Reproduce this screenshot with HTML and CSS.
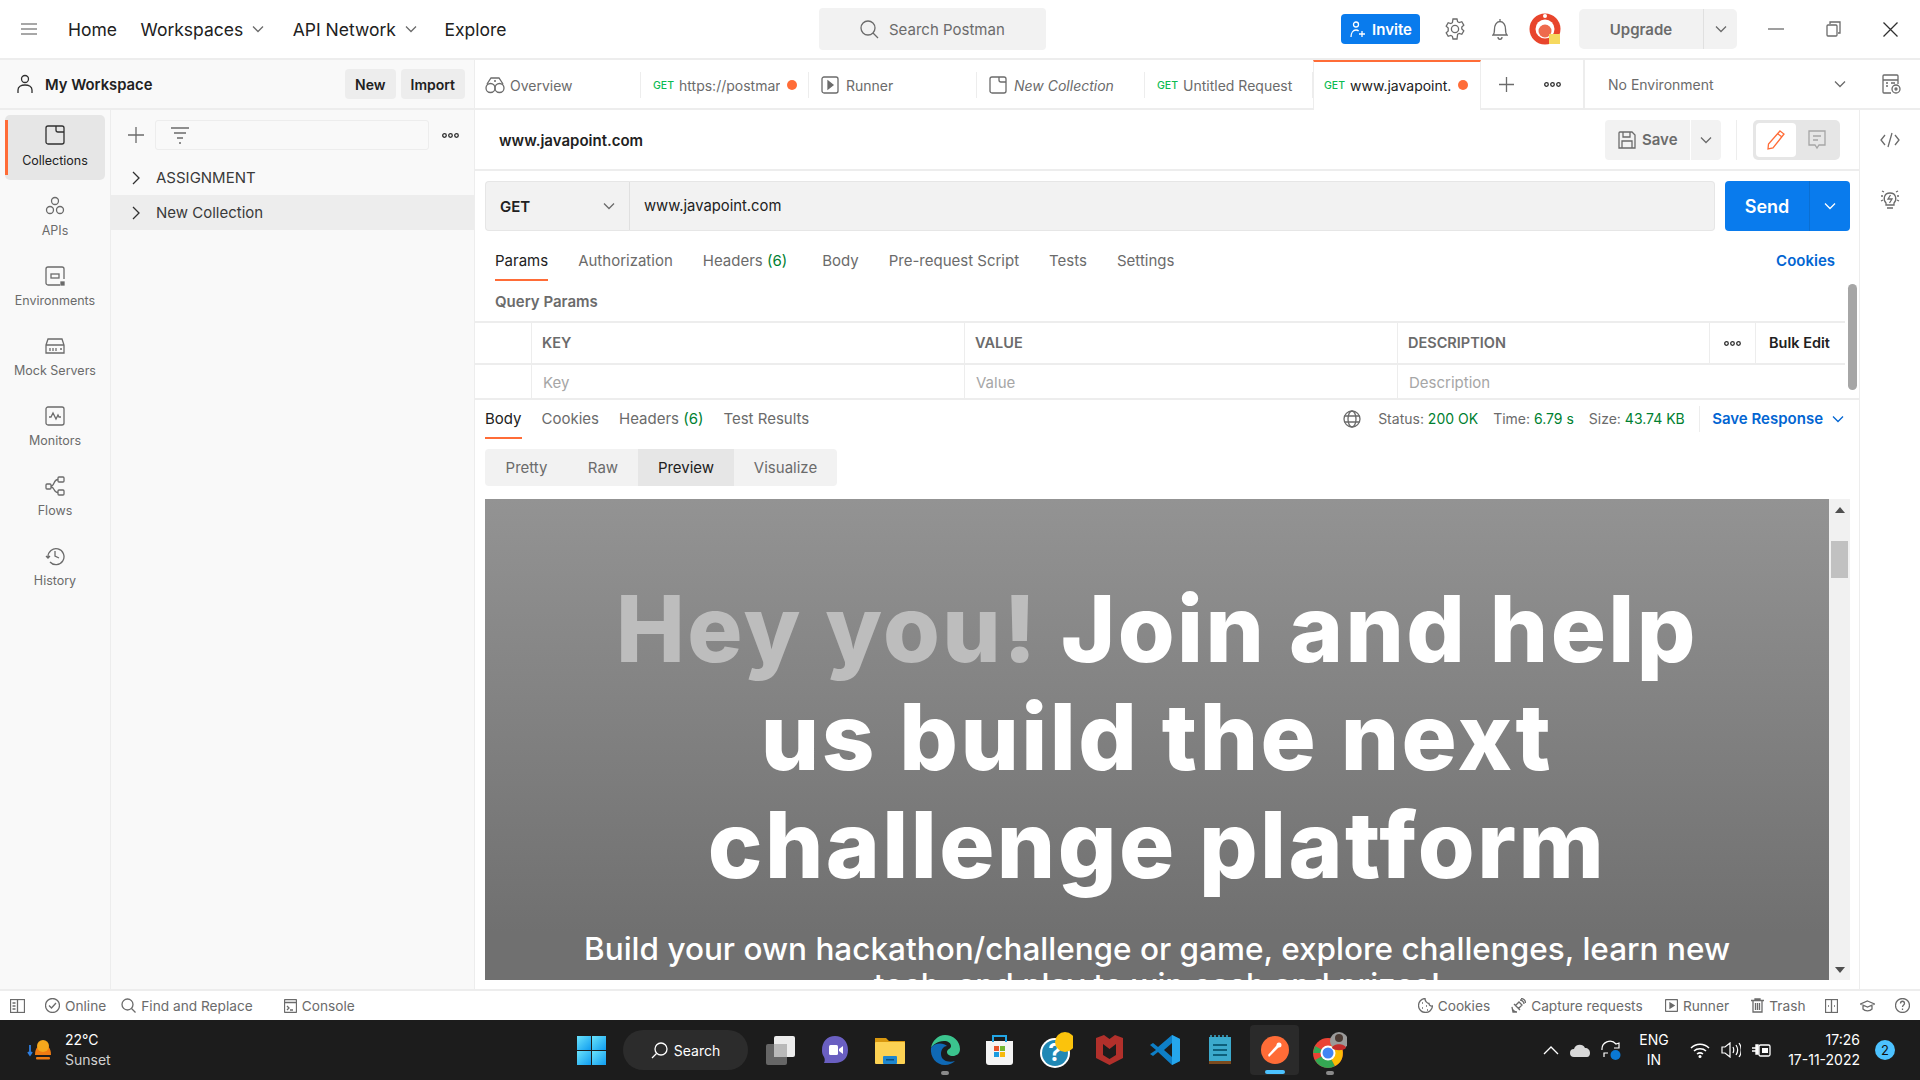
FILE: index.html
```html
<!DOCTYPE html>
<html lang="en">
<head>
<meta charset="utf-8">
<title>Postman</title>
<link rel="stylesheet" href="styles.css">
</head>
<body>
<div class="app">
  <header class="topbar">
    <svg class="ic burger" width="16" height="12" viewBox="0 0 16 12"><path d="M0 1h16M0 6h16M0 11h16"/></svg>
    <nav class="topnav">
      <a class="nav-home">Home</a>
      <a class="nav-ws">Workspaces <svg class="ic chev" width="12" height="8" viewBox="0 0 12 8"><path d="M1 1.500l5 5 5-5"/></svg></a>
      <a class="nav-api">API Network <svg class="ic chev" width="12" height="8" viewBox="0 0 12 8"><path d="M1 1.500l5 5 5-5"/></svg></a>
      <a>Explore</a>
    </nav>
    <div class="search">
      <svg class="ic" width="20" height="20" viewBox="0 0 20 20"><circle cx="9" cy="9" r="7"/><path d="M14 14l5 5"/></svg>
      <span>Search Postman</span>
    </div>
    <button class="invite">
      <svg class="ic ic-white" width="17" height="17" viewBox="0 0 17 17"><circle cx="7" cy="3.500" r="2.500"/><path d="M2 16c0-4 2-7 5-7 1 0 2 .3 2.600 1M10 13h6M13 10v6"/></svg>
      Invite
    </button>
    <svg class="ic gear" width="20" height="22" viewBox="0 0 20 22"><circle cx="10" cy="11" r="3.600"/><path d="M8 1h4l.6 2.700 1.600.9 2.600-.9 2 3.400-2 1.900v2l2 1.900-2 3.400-2.600-.9-1.600.9L12 21H8l-.6-2.700-1.600-.9-2.600.9-2-3.400 2-1.900V10L1.200 8.100l2-3.400 2.600.9 1.600-.9z"/></svg>
    <svg class="ic bell" width="16" height="22" viewBox="0 0 16 22"><path d="M1 17c1.500-1.500 1.500-3 1.500-6S4 3.500 8 3.500 13.500 8 13.500 11s0 4.500 1.500 6zM8 1v2.500M6 19c0 3 4 3 4 0"/></svg>
    <svg class="avatar" width="32" height="32" viewBox="0 0 32 32"><circle cx="16" cy="16" r="15.500" fill="#e8452c"/><circle cx="16" cy="16" r="9.500" fill="#fff"/><circle cx="16" cy="18" r="6.500" fill="#ee6a4d"/><circle cx="16" cy="3" r="2" fill="#fff"/><rect x="20" y="21" width="11" height="10" fill="#f6d95f"/></svg>
    <div class="upgrade"><span class="upgrade-label">Upgrade</span><span class="upgrade-arrow"><svg class="ic" width="12" height="8" viewBox="0 0 12 8"><path d="M1 1.500l5 5 5-5"/></svg></span></div>
    <div class="winctl">
      <svg class="ic" width="16" height="2" viewBox="0 0 16 2"><path d="M0 1h16"/></svg>
      <svg class="ic" width="15" height="16" viewBox="0 0 15 16"><rect x="1" y="4" width="10" height="11" rx="1"/><path d="M4 3V1h10v11h-2"/></svg>
      <svg class="ic ic-dark" width="15" height="15" viewBox="0 0 15 15"><path d="M.5.500l14 14M14.500.500l-14 14"/></svg>
    </div>
  </header>

  <div class="middle">
    <aside class="left">
      <div class="ws-head">
        <svg class="ic ic-dark" width="16" height="20" viewBox="0 0 16 20"><circle cx="8" cy="5" r="3.500"/><path d="M1 19v-3c0-3 3-5 7-5s7 2 7 5v3"/></svg>
        <strong class="ws-title">My Workspace</strong>
        <button class="mini">New</button>
        <button class="mini">Import</button>
      </div>
      <div class="left-body">
        <nav class="rail">
          <a class="rail-item active"><svg class="ic ic-dark" width="20" height="20" viewBox="0 0 20 20"><path d="M3 1h14a2 2 0 0 1 2 2v14a2 2 0 0 1-2 2H3a2 2 0 0 1-2-2V3a2 2 0 0 1 2-2zM11 1v4a2 2 0 0 0 2 2h6"/></svg>Collections</a>
          <a class="rail-item"><svg class="ic" width="20" height="20" viewBox="0 0 20 20"><circle cx="10" cy="5" r="3.500"/><circle cx="5" cy="14" r="3.500"/><circle cx="15" cy="14" r="3.500"/></svg>APIs</a>
          <a class="rail-item"><svg class="ic" width="20" height="20" viewBox="0 0 20 20"><path d="M15 19H3a2 2 0 0 1-2-2V3a2 2 0 0 1 2-2h14a2 2 0 0 1 2 2v10"/><rect x="6" y="8" width="8" height="4"/><rect x="16" y="16" width="3" height="3" fill="#6b6b6b"/></svg>Environments</a>
          <a class="rail-item"><svg class="ic" width="20" height="20" viewBox="0 0 20 18"><path d="M1 8l2-6h14l2 6v8H1zM1 8h18M5 11v3M8 11v3M11 11v3M15 12h2"/></svg>Mock Servers</a>
          <a class="rail-item"><svg class="ic" width="20" height="20" viewBox="0 0 20 20"><rect x="1" y="1" width="18" height="18" rx="2"/><path d="M4 11h2l2-4 3 6 2-4 1 2h2"/></svg>Monitors</a>
          <a class="rail-item"><svg class="ic" width="20" height="20" viewBox="0 0 20 20"><rect x="1" y="8" width="5" height="5" rx="1"/><rect x="13" y="1" width="6" height="5" rx="1"/><rect x="13" y="14" width="6" height="5" rx="1"/><path d="M6 10c4 0 2-6.500 7-6.500M6 11c4 0 2 5.500 7 5.500"/></svg>Flows</a>
          <a class="rail-item"><svg class="ic" width="20" height="20" viewBox="0 0 20 20"><path d="M1 10l2 2 2-2M3 11a8 8 0 1 1 2 5M10 5v5l4 2"/></svg>History</a>
        </nav>
        <div class="coll">
          <div class="coll-tools">
            <svg class="ic" width="16" height="16" viewBox="0 0 16 16"><path d="M8 0v16M0 8h16"/></svg>
            <div class="filter"><svg class="ic" width="18" height="18" viewBox="0 0 18 18"><path d="M0 2h18M3 7h12M6 12h6M8 17h2"/></svg></div>
            <svg class="ic ic-dark dots" width="17" height="5" viewBox="0 0 17 5"><circle cx="2.500" cy="2.500" r="1.800"/><circle cx="8.500" cy="2.500" r="1.800"/><circle cx="14.500" cy="2.500" r="1.800"/></svg>
          </div>
          <div class="coll-row"><svg class="ic ic-dark" width="8" height="14" viewBox="0 0 8 14"><path d="M1 1l6 6-6 6"/></svg>ASSIGNMENT</div>
          <div class="coll-row selected"><svg class="ic ic-dark" width="8" height="14" viewBox="0 0 8 14"><path d="M1 1l6 6-6 6"/></svg>New Collection</div>
        </div>
      </div>
    </aside>

    <section class="right">
      <div class="tabbar">
        <div class="tab first"><svg class="ic" width="20" height="18" viewBox="0 0 20 18"><circle cx="5.500" cy="12" r="4.500"/><circle cx="14.500" cy="12" r="4.500"/><path d="M2 8l4-6h8l4 6M9 5h2"/></svg><span>Overview</span></div>
        <div class="tab req"><span class="get">GET</span><span class="tab-name">https://postmar</span><i class="dot"></i></div>
        <div class="tab"><svg class="ic" width="18" height="18" viewBox="0 0 18 18"><rect x="1" y="1" width="16" height="16" rx="2"/><path d="M7 5l5 4-5 4z" fill="#6b6b6b"/></svg><span>Runner</span></div>
        <div class="tab"><svg class="ic" width="18" height="18" viewBox="0 0 18 18"><path d="M3 1h12a2 2 0 0 1 2 2v12a2 2 0 0 1-2 2H3a2 2 0 0 1-2-2V3a2 2 0 0 1 2-2zM10 1v3a2 2 0 0 0 2 2h5"/></svg><em>New Collection</em></div>
        <div class="tab req"><span class="get">GET</span><span class="tab-name">Untitled Request</span></div>
        <div class="tab req current"><span class="get">GET</span><span class="tab-name">www.javapoint.</span><i class="dot"></i></div>
        <div class="tab-tools">
          <svg class="ic" width="15" height="15" viewBox="0 0 15 15"><path d="M7.500 0v15M0 7.500h15"/></svg>
          <svg class="ic ic-dark" width="17" height="5" viewBox="0 0 17 5"><circle cx="2.500" cy="2.500" r="1.800"/><circle cx="8.500" cy="2.500" r="1.800"/><circle cx="14.500" cy="2.500" r="1.800"/></svg>
        </div>
        <div class="env"><span>No Environment</span><svg class="ic" width="12" height="8" viewBox="0 0 12 8"><path d="M1 1.500l5 5 5-5"/></svg></div>
        <div class="env-eye"><svg class="ic" width="20" height="20" viewBox="0 0 20 20"><path d="M10 19H3a1 1 0 0 1-1-1V2a1 1 0 0 1 1-1h13a1 1 0 0 1 1 1v8M2 6h15M5 9h2M5 12h2M10 9h4"/><circle cx="15" cy="15" r="4"/><circle cx="15" cy="15" r="1"/></svg></div>
      </div>

      <div class="work">
        <main class="main">
          <div class="title-row">
            <strong class="req-title">www.javapoint.com</strong>
            <div class="save"><span class="save-l"><svg class="ic" width="18" height="18" viewBox="0 0 18 18"><path d="M2 1h12l3 3v13H1V2a1 1 0 0 1 1-1zM5 1v5h7V1M4 17v-7h10v7"/></svg>Save</span><span class="save-r"><svg class="ic" width="12" height="8" viewBox="0 0 12 8"><path d="M1 1.500l5 5 5-5"/></svg></span></div>
            <i class="vsep"></i>
            <div class="mode">
              <span class="mode-on"><svg class="ic ic-orange" width="18" height="20" viewBox="0 0 18 20"><path d="M13 1l4 3L6 18l-5 1 .5-5zM11 4l4 3"/></svg></span>
              <span class="mode-off"><svg class="ic ic-light" width="18" height="20" viewBox="0 0 18 20"><path d="M1 1h16v14h-6l-2 3-2-3H1zM5 6h8M5 10h5"/></svg></span>
            </div>
          </div>
          <div class="url-row">
            <div class="method"><b>GET</b><svg class="ic" width="12" height="8" viewBox="0 0 12 8"><path d="M1 1.500l5 5 5-5"/></svg></div>
            <div class="url">www.javapoint.com</div>
            <div class="send"><span class="send-l">Send</span><span class="send-r"><svg class="ic ic-white" width="12" height="8" viewBox="0 0 12 8"><path d="M1 1.500l5 5 5-5"/></svg></span></div>
          </div>
          <div class="req-tabs">
            <a class="on">Params</a><a>Authorization</a><a>Headers <span class="count">(6)</span></a><a class="m-wide">Body</a><a>Pre-request Script</a><a>Tests</a><a>Settings</a>
            <span class="link cookies">Cookies</span>
          </div>
          <div class="qp">Query Params</div>
          <div class="params-wrap">
            <div class="params">
              <div class="cell"></div><div class="cell th">KEY</div><div class="cell th">VALUE</div><div class="cell th">DESCRIPTION</div><div class="cell center"><svg class="ic ic-dark" width="17" height="5" viewBox="0 0 17 5"><circle cx="2.500" cy="2.500" r="1.800"/><circle cx="8.500" cy="2.500" r="1.800"/><circle cx="14.500" cy="2.500" r="1.800"/></svg></div><div class="cell bulk">Bulk Edit</div>
              <div class="cell"></div><div class="cell ph">Key</div><div class="cell ph">Value</div><div class="cell ph wide">Description</div>
            </div>
            <div class="thumb"></div>
          </div>
          <div class="res-head">
            <a class="on">Body</a><a>Cookies</a><a>Headers <span class="count">(6)</span></a><a>Test Results</a>
            <div class="res-meta">
              <svg class="ic globe" width="18" height="18" viewBox="0 0 18 18"><circle cx="9" cy="9" r="8"/><ellipse cx="9" cy="9" rx="4" ry="8"/><path d="M1.500 6h15M1.500 12h15"/></svg>
              <span class="stat">Status: <b>200 OK</b></span>
              <span class="stat">Time: <b>6.79 s</b></span>
              <span class="stat">Size: <b>43.74 KB</b></span>
              <i class="vsep2"></i>
              <span class="link">Save Response</span>
              <svg class="ic ic-blue" width="12" height="8" viewBox="0 0 12 8"><path d="M1 1.500l5 5 5-5"/></svg>
            </div>
          </div>
          <div class="seg"><a>Pretty</a><a>Raw</a><a class="on">Preview</a><a>Visualize</a></div>
          <div class="preview-wrap">
            <div class="preview">
              <h1><span class="hey">Hey you!</span> Join and help<br>us build the next<br>challenge platform</h1>
              <p>Build your own hackathon/challenge or game, explore challenges, learn new<br>tech, and play to win cash and prizes!</p>
            </div>
            <div class="pv-scroll">
              <span class="up"></span>
              <span class="pv-thumb"></span>
              <span class="down"></span>
            </div>
          </div>
        </main>
        <aside class="rrail">
          <svg class="ic" width="20" height="16" viewBox="0 0 20 16"><path d="M5 3L1 8l4 5M15 3l4 5-4 5M12 1L8 15"/></svg>
          <svg class="ic" width="20" height="22" viewBox="0 0 20 22"><path d="M6 15c-3-3-2.500-10 4-10s7 7 4 10v2H6zM7 20h6M10.500 7L8 11h4l-2.500 4M1 8h2M17 8h2M2 3l2 1M18 3l-2 1M1 13l2-1M19 13l-2-1"/></svg>
        </aside>
      </div>
    </section>
  </div>

  <footer class="status">
    <svg class="ic" width="15" height="14" viewBox="0 0 15 14"><rect x=".5" y=".5" width="14" height="13"/><path d="M7.500.500v13M2.500 4h3M2.500 7h3M2.500 10h3"/></svg>
    <span class="st st-online"><svg class="ic" width="15" height="15" viewBox="0 0 15 15"><circle cx="7.500" cy="7.500" r="7"/><path d="M4 7.500l2.500 2.500 4.500-5"/></svg>Online</span>
    <span class="st st-find"><svg class="ic" width="15" height="15" viewBox="0 0 15 15"><circle cx="6.500" cy="6.500" r="5.500"/><path d="M10.500 10.500l4 4"/></svg>Find and Replace</span>
    <span class="st st-console"><svg class="ic" width="13" height="14" viewBox="0 0 13 14"><rect x=".5" y=".5" width="12" height="13" rx="1"/><path d="M.5 3.500h12M3 7l2 2-2 2M6 11h3"/></svg>Console</span>
    <span class="st st-cookies"><svg class="ic" width="15" height="15" viewBox="0 0 15 15"><path d="M7 .500a7 7 0 1 0 7.500 7.500c-2 .500-3.500-1-3.500-2.500C9 5.500 7 3 7 .500zM4 5h1M4 10h1M8 8h1M9 12h1"/></svg>Cookies</span>
    <span class="st st-capture"><svg class="ic" width="15" height="15" viewBox="0 0 15 15"><path d="M1 9a5 5 0 0 0 5 5L2 14zM3 6l6 6M4 8l4-4 3 3-4 4M9 2c2 0 4 2 4 4M10 .500c2.500 0 4.500 2 4.500 4.500"/></svg>Capture requests</span>
    <span class="st st-runner"><svg class="ic" width="13" height="13" viewBox="0 0 13 13"><rect x=".5" y=".5" width="12" height="12" rx="1"/><path d="M5 4l4 2.500L5 9z" fill="#6b6b6b"/></svg>Runner</span>
    <span class="st st-trash"><svg class="ic" width="13" height="15" viewBox="0 0 13 15"><path d="M0 2.500h13M4 2.500V1h5v1.500M2 2.500V14h9V2.500M4.500 5v7M6.500 5v7M8.500 5v7"/></svg>Trash</span>
    <svg class="ic st-two" width="13" height="14" viewBox="0 0 13 14"><rect x=".5" y=".5" width="12" height="13"/><path d="M6.500.500v13M3 7h1M9 7h1"/></svg>
    <svg class="ic st-cap" width="15" height="12" viewBox="0 0 15 12"><path d="M7.500 1L14.500 4l-7 3-7-3zM3 5v4c2 2.500 7 2.500 9 0V5"/></svg>
    <svg class="ic st-help" width="15" height="15" viewBox="0 0 15 15"><circle cx="7.500" cy="7.500" r="7"/><path d="M5.500 5.500c0-3 4-3 4 0 0 1.500-2 1.500-2 3.500M7.500 10.500v1.500"/></svg>
  </footer>

  <footer class="taskbar">
    <div class="weather">
      <svg width="26" height="24" viewBox="0 0 26 24"><path d="M3 7v10M1 14l2 3 2-3" stroke="#2f7fe0" stroke-width="1.800" fill="none"/><path d="M8 17c0-7 3-10 8-10s8 3 8 10z" fill="#f07b12"/><circle cx="16" cy="8" r="6" fill="#f5a71c"/><rect x="9" y="19" width="14" height="2.500" rx="1" fill="#f07b12"/></svg>
      <div class="w-text"><span>22°C</span><span class="w-sub">Sunset</span></div>
    </div>
    <div class="start"><i></i><i></i><i></i><i></i></div>
    <div class="tb-search"><svg class="ic ic-white" width="17" height="17" viewBox="0 0 17 17"><circle cx="10" cy="7" r="6"/><path d="M5.500 11.500L1 16"/></svg>Search</div>
    <div class="apps">
      <span class="app-i"><svg width="30" height="30" viewBox="0 0 30 30"><rect x="9" y="1" width="21" height="21" rx="2" fill="#ececec"/><rect x="1" y="9" width="21" height="21" rx="2" fill="#6d6d6d" opacity=".92"/><rect x="9" y="9" width="13" height="13" fill="#b9b9b9"/></svg></span>
      <span class="app-i"><svg width="28" height="30" viewBox="0 0 28 30"><path d="M14 1c8 0 13 6 13 14s-5 13-13 13H3c1-2 1-4 0-6-2-3-2-5-2-7C1 7 6 1 14 1z" fill="#6a5fc1"/><rect x="8" y="10" width="9" height="10" rx="1.500" fill="#fff"/><path d="M18 14l4-3v8l-4-3z" fill="#fff"/></svg></span>
      <span class="app-i"><svg width="30" height="28" viewBox="0 0 30 28"><path d="M0 2h11l3 3h16v4H0z" fill="#d9980f"/><rect y="6" width="30" height="22" rx="1" fill="#fdd253"/><rect x="8" y="20" width="14" height="8" rx="1" fill="#1f87cf"/><rect x="11" y="23" width="8" height="1.500" fill="#0b4f80"/></svg></span>
      <span class="app-i has-pip"><svg width="30" height="30" viewBox="0 0 30 30"><path d="M15 0c8 0 15 6 15 14 0 5-4 7-7 7-4 0-6-2-6-4 0-3 4-3 4-6 0-3-3-5-7-5C7 6 3 10 1 13 2 6 8 0 15 0z" fill="#3bc48e"/><path d="M1 13C0 22 6 30 15 30c4 0 8-2 10-4-6 2-14 0-14-7 0-5 3-8 6-8-3-3-12-4-16 2z" fill="#0f69b5"/></svg><i class="pip"></i></span>
      <span class="app-i"><svg width="29" height="30" viewBox="0 0 29 30"><path d="M1 6h27v21a3 3 0 0 1-3 3H4a3 3 0 0 1-3-3z" fill="#f4f4f4"/><path d="M8 7V1h13v6" stroke="#22a5e5" stroke-width="2" fill="none"/><rect x="9" y="11" width="5" height="5" fill="#e8552d"/><rect x="15" y="11" width="5" height="5" fill="#74b72f"/><rect x="9" y="17" width="5" height="5" fill="#1a9be0"/><rect x="15" y="17" width="5" height="5" fill="#f7b90c"/></svg></span>
      <span class="app-i"><svg width="36" height="38" viewBox="-2 0 36 38"><circle cx="16" cy="22" r="15" fill="#fff"/><circle cx="16" cy="22" r="13" fill="#2088b5"/><text x="16" y="30" text-anchor="middle" class="q">?</text><circle cx="26" cy="11" r="10" fill="#fbc30c"/></svg></span>
      <span class="app-i"><svg width="27" height="30" viewBox="0 0 27 30"><path d="M0 3l8-3 5.500 4L19 0l8 3v20l-13.500 7L0 23z" fill="#b1302b"/><path d="M7 9l6.500 5L20 9v11l-6.500 4L7 20z" fill="#1c1c1c"/></svg></span>
      <span class="app-i"><svg width="30" height="30" viewBox="0 0 30 30"><path d="M22 0l8 4v22l-8 4L8 17l-5 4-3-2 6-4-6-5 3-2 5 4z" fill="#0e7fc7"/><path d="M22 0l8 4v22l-8 4z" fill="#25a6ec"/><path d="M22 8l-8 7 8 7z" fill="#1c1c1c"/></svg></span>
      <span class="app-i"><svg width="22" height="30" viewBox="0 0 22 30"><rect y="2" width="22" height="26" fill="#3ba9cc"/><rect y="26" width="22" height="3" fill="#7b4a1e"/><path d="M4 10h14M4 15h14M4 20h14" stroke="#0d5f7b" stroke-width="2"/><path d="M2 0v3M6 0v3M10 0v3M14 0v3M18 0v3" stroke="#3ba9cc" stroke-width="1.500"/></svg></span>
      <span class="app-i postman"><svg width="28" height="28" viewBox="0 0 28 28"><circle cx="14" cy="14" r="14" fill="#ff6c37"/><path d="M8 21l9-9 3-3-2-2-3 3-8 9z" fill="#fff"/><circle cx="18" cy="9" r="2.500" fill="#fff"/></svg><i class="active-bar"></i></span>
      <span class="app-i has-pip"><svg width="34" height="36" viewBox="0 0 34 36"><circle cx="15" cy="21" r="15" fill="#ea4335"/><path d="M15 21L2 28c4 8 14 10 20 6z" fill="#34a853"/><path d="M15 21l7 13c7-3 10-12 6-20H15z" fill="#fbbc05"/><path d="M0 21L15 21 2 14z" fill="#34a853"/><circle cx="15" cy="21" r="7.500" fill="#fff"/><circle cx="15" cy="21" r="5.500" fill="#4285f4"/><circle cx="26" cy="9" r="9" fill="#9a9a9a"/><circle cx="26" cy="6" r="4" fill="#4a3a33"/><path d="M19 16c1-5 13-5 14 0-3 3-11 3-14 0z" fill="#c42c2c"/></svg><i class="pip"></i></span>
    </div>
    <div class="tray">
      <svg class="ic ic-white" width="16" height="9" viewBox="0 0 16 9"><path d="M1 8l7-7 7 7"/></svg>
      <svg width="20" height="13" viewBox="0 0 20 13"><path d="M4 13a4 4 0 0 1 0-8c1-5 9-6 11-1 3 0 5 2 5 5 0 2-1 4-3 4z" fill="#d8d8d8"/></svg>
      <svg class="sync" width="20" height="20" viewBox="0 0 20 20"><path d="M1 10a8 8 0 0 1 14-6l3-1v5h-5M3 17v-4h4" stroke="#fff" stroke-width="1.200" fill="none"/><circle cx="14.500" cy="15" r="5" fill="#0a78d4"/></svg>
      <div class="lang"><span>ENG</span><span>IN</span></div>
      <svg width="20" height="15" viewBox="0 0 20 15"><path d="M1 5c5-5 13-5 18 0M4 8c3-3 9-3 12 0M7 11c2-1.500 4-1.500 6 0" stroke="#fff" stroke-width="1.500" fill="none"/><circle cx="10" cy="13.500" r="1.500" fill="#fff"/></svg>
      <svg width="20" height="16" viewBox="0 0 20 16"><path d="M1 5h3l5-4v14l-5-4H1zM12 5c1 2 1 4 0 6M15 3c2 3 2 7 0 10M18 1c3 4 3 10 0 14" stroke="#fff" stroke-width="1.200" fill="none"/></svg>
      <svg width="20" height="16" viewBox="0 0 20 16"><path d="M0 6h4M0 9h4M4 3v9h2V3z" stroke="#fff" stroke-width="1.400" fill="#fff"/><rect x="7" y="3" width="11" height="11" rx="1.500" stroke="#fff" stroke-width="1.300" fill="none"/><rect x="10" y="6" width="6" height="5" fill="#fff"/></svg>
      <div class="clock"><span>17:26</span><span>17-11-2022</span></div>
      <span class="badge">2</span>
    </div>
  </footer>
</div>
</body>
</html>
```

FILE: styles.css
```css
* { box-sizing: border-box; }
html, body { margin: 0; height: 100%; overflow: hidden; }
body { font-family: Inter, "Liberation Sans", sans-serif; font-size: 15px; color: #6b6b6b; background: #fff; }
i { font-style: normal; }
em { font-style: italic; }
button { font: inherit; border: 0; }

.ic { fill: none; stroke: #6b6b6b; stroke-width: 1.300; flex: none; display: block; }
.ic-dark { stroke: #303030; }
.ic-white { stroke: #fff; }
.ic-orange { stroke: #ff6c37; }
.ic-blue { stroke: #0265d2; }
.ic-light { stroke: #a6a6a6; }

.app { width: 1920px; height: 1080px; display: flex; flex-direction: column; overflow: hidden; }

/* Top bar */
.topbar { height: 60px; flex: none; display: flex; align-items: center; border-bottom: 2px solid #ededed; padding-left: 21px; }
.burger { stroke: #8a8a8a; }
.topnav { display: flex; gap: 25px; margin-left: 31px; font-size: 17.500px; color: #212121; width: 751px; }
.topnav a { display: flex; align-items: center; gap: 9px; }
.nav-home { margin-right: -1.500px; }
.nav-ws { margin-right: 3.500px; }
.nav-api { margin-right: 2.500px; }
.search { width: 227px; height: 42px; background: #f2f2f2; border-radius: 4px; display: flex; align-items: center; gap: 10px; padding-left: 40px; font-size: 15px; color: #6b6b6b; }
.invite { margin-left: 295px; width: 79px; height: 30px; background: #097bed; color: #fff; border-radius: 4px; display: flex; align-items: center; justify-content: center; gap: 6px; font-weight: 600; font-size: 15px; }
.gear { margin-left: 25px; }
.bell { margin-left: 27px; }
.avatar { margin-left: 21px; }
.upgrade { margin-left: 18px; width: 158px; height: 40px; background: #f2f2f2; border-radius: 5px; display: flex; font-weight: 600; font-size: 15px; }
.upgrade-label { width: 124px; display: flex; align-items: center; justify-content: center; }
.upgrade-arrow { flex: 1; border-left: 1px solid #e0e0e0; display: flex; align-items: center; justify-content: center; }
.winctl { display: flex; align-items: center; margin-left: 31px; gap: 42px; }

/* Middle */
.middle { flex: 1; min-height: 0; display: flex; }
.left { width: 475px; flex: none; background: #f9f9f9; border-right: 1px solid #ededed; display: flex; flex-direction: column; }
.ws-head { height: 50px; flex: none; display: flex; align-items: center; gap: 5px; border-bottom: 2px solid #ededed; padding: 0 9px 0 17px; }
.ws-title { flex: 1; margin-left: 7px; padding-top: 2px; font-size: 14.800px; font-weight: 600; color: #212121; }
.mini { height: 30px; padding: 0 10px; background: #ededed; border-radius: 4px; color: #212121; font-weight: 600; font-size: 14px; }
.left-body { flex: 1; display: flex; min-height: 0; }
.rail { width: 111px; flex: none; border-right: 1px solid #ededed; padding: 5px 5px 0; display: flex; flex-direction: column; gap: 5px; }
.rail-item { height: 65px; flex: none; display: flex; flex-direction: column; align-items: center; gap: 7px; padding-top: 11px; font-size: 12.500px; color: #6b6b6b; border-radius: 5px; }
.rail-item.active { background: #e6e6e6; color: #212121; position: relative; gap: 8px; padding-top: 10px; }
.rail-item.active::before { content: ""; position: absolute; left: 0; top: 5px; bottom: 5px; width: 3px; background: #ff6c37; }
.coll { flex: 1; min-width: 0; padding-top: 10px; }
.coll-tools { display: flex; align-items: center; height: 30px; padding: 0 12px 0 17px; }
.filter { width: 274px; height: 30px; margin-left: 11px; border: 1px solid #ededed; border-radius: 3px; padding: 5px 0 0 15px; }
.dots { margin-left: 13px; }
.coll-row { height: 35px; display: flex; align-items: center; gap: 16px; padding-left: 21px; font-size: 15px; color: #3a3a3a; }
.coll-tools + .coll-row { margin-top: 10px; }
.coll-row.selected { background: #ededed; }

/* Right */
.right { flex: 1; min-width: 0; display: flex; flex-direction: column; }
.tabbar { height: 50px; flex: none; display: flex; border-bottom: 2px solid #ededed; }
.tab { width: 168px; flex: none; margin-bottom: -2px; display: flex; align-items: center; gap: 7px; padding: 0 12px; font-size: 14px; color: #6b6b6b; position: relative; white-space: nowrap; overflow: hidden; }
.tab.req { gap: 5px; }
.tab.first { width: 166px; padding-left: 10px; gap: 5px; }
.tab::after { content: ""; position: absolute; right: 0; top: 12px; bottom: 12px; width: 1px; background: #ededed; }
.get { font-size: 10.500px; color: #0cbb52; font-weight: 500; }
.tab-name { flex: 1; min-width: 0; overflow: hidden; }
.dot { width: 10px; height: 10px; border-radius: 50%; background: #ff6c37; flex: none; margin-left: 2px; }
.tab.current { background: #fff; border-top: 2px solid #ff6c37; border-left: 1px solid #ededed; border-right: 1px solid #ededed; color: #212121; padding-bottom: 2px; padding-left: 10px; }
.tab.current::after { display: none; }
.tab-tools { width: 102px; flex: none; display: flex; align-items: center; gap: 30px; padding-left: 18px; }
.env { width: 278px; flex: none; border-left: 2px solid #ededed; display: flex; align-items: center; justify-content: space-between; padding: 0 15px 0 23px; font-size: 14px; }
.env-eye { flex: 1; display: flex; align-items: center; justify-content: center; }

.work { flex: 1; min-height: 0; display: flex; }
.main { width: 1384px; flex: none; display: flex; flex-direction: column; }
.rrail { flex: 1; border-left: 1px solid #ededed; display: flex; flex-direction: column; align-items: center; gap: 40px; padding-top: 22px; }

.title-row { height: 61px; flex: none; display: flex; align-items: center; border-bottom: 2px solid #ededed; padding: 0 19px 0 24px; }
.req-title { flex: 1; font-size: 15px; font-weight: 600; color: #212121; padding-top: 2px; }
.save { display: flex; height: 40px; gap: 1px; font-weight: 600; font-size: 15px; }
.save-l { width: 85px; background: #f2f2f2; border-radius: 4px 0 0 4px; display: flex; align-items: center; gap: 6px; padding-left: 13px; }
.save-r { width: 30px; background: #f2f2f2; border-radius: 0 4px 4px 0; display: flex; align-items: center; justify-content: center; }
.vsep { width: 1px; height: 40px; background: #ededed; margin: 0 16px 0 15px; }
.mode { width: 87px; height: 40px; background: #e6e6e6; border-radius: 5px; padding: 3px; display: flex; }
.mode-on { width: 40px; background: #fff; border-radius: 4px; display: flex; align-items: center; justify-content: center; }
.mode-off { flex: 1; display: flex; align-items: center; justify-content: center; }

.url-row { height: 50px; flex: none; margin: 10px 9px 0 10px; display: flex; }
.method { width: 145px; background: #f2f2f2; border: 1px solid #e6e6e6; border-right: 1px solid #e0e0e0; border-radius: 4px 0 0 4px; display: flex; align-items: center; justify-content: space-between; padding: 0 14px; }
.method b { font-size: 15px; font-weight: 600; color: #212121; }
.url { flex: 1; background: #f2f2f2; border: 1px solid #e6e6e6; border-left: 0; border-radius: 0 4px 4px 0; display: flex; align-items: center; padding-left: 14px; color: #212121; font-size: 14.800px; }
.send { width: 125px; margin-left: 10px; background: #097bed; border-radius: 4px; color: #fff; display: flex; }
.send-l { width: 85px; display: flex; align-items: center; justify-content: center; font-weight: 600; font-size: 18px; border-right: 1px solid #0a6fd3; }
.send-r { flex: 1; display: flex; align-items: center; justify-content: center; }

.req-tabs { height: 50px; flex: none; display: flex; gap: 30px; padding: 0 24px 0 20px; font-size: 15px; }
.req-tabs a { display: flex; align-items: center; height: 100%; padding-top: 8px; white-space: pre; }
.req-tabs a.on, .res-head a.on { color: #212121; box-shadow: inset 0 -2px 0 #ff6c37; }
.m-wide { margin-left: 5px; }
.count { color: #007f31; }
.link { color: #0265d2; font-weight: 600; font-size: 15px; }
.cookies { margin-left: auto; align-self: center; padding-top: 8px; }
.qp { height: 40px; flex: none; padding-left: 20px; display: flex; align-items: center; font-weight: 600; font-size: 15px; color: #6b6b6b; }

.params-wrap { flex: none; position: relative; }
.params { display: grid; grid-template-columns: 56px 433px 433px 312px 46px 90px; grid-template-rows: 42px 35px; width: 1370px; }
.cell { border-top: 2px solid #ededed; border-left: 1px solid #ededed; display: flex; align-items: center; padding: 0 0 1px 10px; font-size: 14.500px; min-width: 0; }
.cell:first-child, .cell:nth-child(7) { border-left: 0; }
.th { font-weight: 600; color: #6b6b6b; }
.center { justify-content: center; padding: 0; }
.bulk { color: #212121; font-weight: 600; padding-left: 13px; white-space: nowrap; }
.ph { color: #a6a6a6; padding: 2px 0 0 11px; font-size: 15px; }
.wide { grid-column: span 3; }
.thumb { position: absolute; right: 2px; top: -37px; width: 9px; height: 106px; background: #a6a6a6; border-radius: 5px; }

.res-head { height: 52px; flex: none; display: flex; gap: 20px; align-items: stretch; border-top: 2px solid #ededed; padding: 0 15px 0 10px; font-size: 15px; }
.res-head a { display: flex; align-items: center; white-space: pre; height: 39px; padding-bottom: 2px; }
.res-meta { margin-left: auto; display: flex; align-items: center; height: 37px; font-size: 14px; }
.stat { margin-right: 15px; white-space: nowrap; }
.stat b { font-weight: 400; color: #007f31; }
.stat:nth-of-type(3) { margin-right: 14.500px; }
.globe { margin-right: 17px; }
.vsep2 { width: 1px; height: 26px; background: #ededed; margin-right: 12px; }
.res-meta .ic-blue { margin-left: 9px; }

.seg { margin-left: 10px; margin-top: -1px; width: 352px; height: 37px; flex: none; background: #f2f2f2; border-radius: 4px; display: flex; overflow: hidden; font-size: 15px; }
.seg a { display: flex; align-items: center; justify-content: center; }
.seg a:nth-child(1) { width: 83px; }
.seg a:nth-child(2) { width: 70px; }
.seg a:nth-child(3) { width: 96px; }
.seg a:nth-child(4) { width: 103px; }
.seg a.on { background: #e6e6e6; color: #212121; }

.preview-wrap { margin: 13px 9px 0 10px; height: 481px; flex: none; display: flex; }
.preview { flex: 1; min-width: 0; overflow: hidden; background: linear-gradient(#939393, #707070 90%); color: #fff; text-align: center; padding-top: 76px; }
.preview h1 { margin: 0; font-size: 92px; line-height: 108px; font-weight: 800; letter-spacing: 2.400px; }
.hey { color: #bdbdbd; }
.preview p { margin: 32px 0 0; font-size: 31.500px; line-height: 36px; font-weight: 500; }
.pv-scroll { width: 21px; flex: none; background: #f1f1f1; position: relative; display: flex; flex-direction: column; align-items: center; }
.up { width: 0; height: 0; border: 5px solid transparent; border-bottom: 6px solid #505050; border-top: 0; margin-top: 8px; }
.pv-thumb { width: 17px; height: 37px; background: #c1c1c1; margin-top: 28px; }
.down { width: 0; height: 0; border: 5px solid transparent; border-top: 6px solid #505050; border-bottom: 0; margin-top: auto; margin-bottom: 7px; }

/* Status footer */
.status { height: 31px; flex: none; border-top: 2px solid #ededed; display: flex; align-items: center; padding-left: 10px; font-size: 13.700px; }
.st { display: flex; align-items: center; gap: 5px; white-space: nowrap; }
.st-online { margin-left: 20px; }
.st-find { margin-left: 15px; }
.st-console { margin-left: 31px; }
.st-cookies { margin-left: auto; }
.st-capture { margin-left: 21px; }
.st-runner { margin-left: 22.200px; }
.st-trash { margin-left: 22.200px; }
.st-two { margin-left: 19.500px; }
.st-cap { margin-left: 22px; }
.st-help { margin: 0 10px 0 20px; }

/* Taskbar */
.taskbar { height: 60px; flex: none; background: #1c1c1c; color: #fff; display: flex; align-items: center; padding-left: 27px; }
.weather { display: flex; align-items: center; gap: 12px; width: 550px; }
.w-text { display: flex; flex-direction: column; font-size: 14px; line-height: 20px; }
.w-sub { color: #d0d0d0; }
.start { width: 29px; height: 29px; display: grid; grid-template-columns: 1fr 1fr; gap: 1px; }
.start i { background: linear-gradient(135deg, #6ae3fb, #0f9cf0); }
.tb-search { margin-left: 17px; width: 125px; height: 40px; border-radius: 20px; background: #2c2c2c; display: flex; align-items: center; justify-content: center; gap: 6px; font-size: 14px; }
.apps { display: flex; align-items: center; margin-left: 4px; width: 600px; }
.app-i { flex: none; width: 55px; height: 50px; display: flex; align-items: center; justify-content: center; position: relative; }
.app-i .q { font: 700 24px Inter, sans-serif; fill: #fff; }
.postman { background: #2a2a2a; border-radius: 4px; width: 49px; margin: 0 3px; }
.pip { position: absolute; bottom: 0; left: 50%; margin-left: -4px; width: 8px; height: 4px; border-radius: 2px; background: #8a8a8a; }
.active-bar { position: absolute; bottom: 1px; left: 50%; margin-left: -10px; width: 20px; height: 4px; border-radius: 2px; background: #4cc2ff; }
.tray { margin-left: auto; display: flex; align-items: center; gap: 11px; padding-right: 25px; font-size: 14px; }
.lang { display: flex; flex-direction: column; align-items: center; line-height: 20px; margin: 0 10px 0 7px; }
.clock { display: flex; flex-direction: column; align-items: flex-end; line-height: 20px; margin-left: 5.500px; }
.badge { width: 20px; height: 20px; border-radius: 50%; background: #4cc2ff; color: #111; display: flex; align-items: center; justify-content: center; font-size: 13px; margin-left: 4px; }
```
